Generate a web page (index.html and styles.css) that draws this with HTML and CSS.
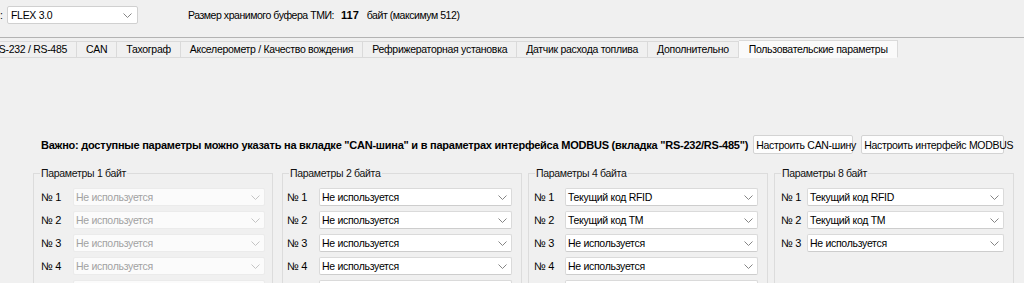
FILE: index.html
```html
<!DOCTYPE html>
<html lang="ru">
<head>
<meta charset="utf-8">
<title>Пользовательские параметры</title>
<link rel="stylesheet" href="styles.css">
</head>
<body>
<div class="top">
  <span class="cut">:</span>
  <div class="combo combo-top"><span>FLEX 3.0</span><svg class="chev" width="9" height="5" viewBox="0 0 9 5"><polyline points="0.5,0.5 4.5,4.5 8.5,0.5"/></svg></div>
  <div class="buf"><span>Размер хранимого буфера ТМИ:</span><b class="val">117</b><span>байт (максимум 512)</span></div>
</div>
<div class="rule"></div>
<div class="tabs">
  <div class="tab tab-first"><span>RS-232 / RS-485</span></div>
  <div class="tab">CAN</div>
  <div class="tab">Тахограф</div>
  <div class="tab">Акселерометр / Качество вождения</div>
  <div class="tab">Рефрижераторная установка</div>
  <div class="tab">Датчик расхода топлива</div>
  <div class="tab">Дополнительно</div>
  <div class="tab tab-active">Пользовательские параметры</div>
</div>
<div class="page">
  <div class="notice">
    <b class="notice-text">Важно: доступные параметры можно указать на вкладке "CAN-шина" и в параметрах интерфейса MODBUS (вкладка "RS-232/RS-485")</b>
    <button class="btn btn-can">Настроить CAN-шину</button>
    <button class="btn btn-modbus">Настроить интерфейс MODBUS</button>
  </div>
  <div class="groups">
    <fieldset class="group g1">
      <legend>Параметры 1 байт</legend>
      <div class="row"><span class="num">№ 1</span><div class="combo disabled"><span>Не используется</span><svg class="chev" width="9" height="5" viewBox="0 0 9 5"><polyline points="0.5,0.5 4.5,4.5 8.5,0.5"/></svg></div></div>
      <div class="row"><span class="num">№ 2</span><div class="combo disabled"><span>Не используется</span><svg class="chev" width="9" height="5" viewBox="0 0 9 5"><polyline points="0.5,0.5 4.5,4.5 8.5,0.5"/></svg></div></div>
      <div class="row"><span class="num">№ 3</span><div class="combo disabled"><span>Не используется</span><svg class="chev" width="9" height="5" viewBox="0 0 9 5"><polyline points="0.5,0.5 4.5,4.5 8.5,0.5"/></svg></div></div>
      <div class="row"><span class="num">№ 4</span><div class="combo disabled"><span>Не используется</span><svg class="chev" width="9" height="5" viewBox="0 0 9 5"><polyline points="0.5,0.5 4.5,4.5 8.5,0.5"/></svg></div></div>
      <div class="row"><span class="num">№ 5</span><div class="combo disabled"><span>Не используется</span><svg class="chev" width="9" height="5" viewBox="0 0 9 5"><polyline points="0.5,0.5 4.5,4.5 8.5,0.5"/></svg></div></div>
    </fieldset>
    <fieldset class="group g2">
      <legend>Параметры 2 байта</legend>
      <div class="row"><span class="num">№ 1</span><div class="combo"><span>Не используется</span><svg class="chev" width="9" height="5" viewBox="0 0 9 5"><polyline points="0.5,0.5 4.5,4.5 8.5,0.5"/></svg></div></div>
      <div class="row"><span class="num">№ 2</span><div class="combo"><span>Не используется</span><svg class="chev" width="9" height="5" viewBox="0 0 9 5"><polyline points="0.5,0.5 4.5,4.5 8.5,0.5"/></svg></div></div>
      <div class="row"><span class="num">№ 3</span><div class="combo"><span>Не используется</span><svg class="chev" width="9" height="5" viewBox="0 0 9 5"><polyline points="0.5,0.5 4.5,4.5 8.5,0.5"/></svg></div></div>
      <div class="row"><span class="num">№ 4</span><div class="combo"><span>Не используется</span><svg class="chev" width="9" height="5" viewBox="0 0 9 5"><polyline points="0.5,0.5 4.5,4.5 8.5,0.5"/></svg></div></div>
      <div class="row"><span class="num">№ 5</span><div class="combo"><span>Не используется</span><svg class="chev" width="9" height="5" viewBox="0 0 9 5"><polyline points="0.5,0.5 4.5,4.5 8.5,0.5"/></svg></div></div>
    </fieldset>
    <fieldset class="group g3">
      <legend>Параметры 4 байта</legend>
      <div class="row"><span class="num">№ 1</span><div class="combo"><span>Текущий код RFID</span><svg class="chev" width="9" height="5" viewBox="0 0 9 5"><polyline points="0.5,0.5 4.5,4.5 8.5,0.5"/></svg></div></div>
      <div class="row"><span class="num">№ 2</span><div class="combo"><span>Текущий код ТМ</span><svg class="chev" width="9" height="5" viewBox="0 0 9 5"><polyline points="0.5,0.5 4.5,4.5 8.5,0.5"/></svg></div></div>
      <div class="row"><span class="num">№ 3</span><div class="combo"><span>Не используется</span><svg class="chev" width="9" height="5" viewBox="0 0 9 5"><polyline points="0.5,0.5 4.5,4.5 8.5,0.5"/></svg></div></div>
      <div class="row"><span class="num">№ 4</span><div class="combo"><span>Не используется</span><svg class="chev" width="9" height="5" viewBox="0 0 9 5"><polyline points="0.5,0.5 4.5,4.5 8.5,0.5"/></svg></div></div>
      <div class="row"><span class="num">№ 5</span><div class="combo"><span>Не используется</span><svg class="chev" width="9" height="5" viewBox="0 0 9 5"><polyline points="0.5,0.5 4.5,4.5 8.5,0.5"/></svg></div></div>
    </fieldset>
    <fieldset class="group g4">
      <legend>Параметры 8 байт</legend>
      <div class="row"><span class="num">№ 1</span><div class="combo"><span>Текущий код RFID</span><svg class="chev" width="9" height="5" viewBox="0 0 9 5"><polyline points="0.5,0.5 4.5,4.5 8.5,0.5"/></svg></div></div>
      <div class="row"><span class="num">№ 2</span><div class="combo"><span>Текущий код ТМ</span><svg class="chev" width="9" height="5" viewBox="0 0 9 5"><polyline points="0.5,0.5 4.5,4.5 8.5,0.5"/></svg></div></div>
      <div class="row"><span class="num">№ 3</span><div class="combo"><span>Не используется</span><svg class="chev" width="9" height="5" viewBox="0 0 9 5"><polyline points="0.5,0.5 4.5,4.5 8.5,0.5"/></svg></div></div>
    </fieldset>
  </div>
</div>
</body>
</html>
```
FILE: styles.css
```css
html, body {
  margin: 0;
  padding: 0;
}
body {
  background: #f0f0f0;
  font-family: "Liberation Sans", Arial, sans-serif;
  font-size: 10.5px;
  letter-spacing: -0.3px;
  color: #000;
  width: 1024px;
  height: 283px;
  overflow: hidden;
}

/* top bar */
.top {
  height: 37px;
  box-sizing: border-box;
  padding-top: 6px;
  display: flex;
  align-items: flex-start;
}
.cut {
  width: 3px;
  line-height: 18px;
  overflow: hidden;
}
.combo {
  display: flex;
  align-items: center;
  justify-content: space-between;
  box-sizing: border-box;
  height: 18px;
  background: #fff;
  border: 1px solid #dadada;
  border-bottom-color: #cdcdcd;
  border-radius: 2px;
  padding: 0 4px 0 2px;
  white-space: nowrap;
  flex: 1;
}
.combo-top {
  flex: none;
  width: 131px;
  margin-left: 4px;
  border-color: #d0d0d0;
  padding: 0 5px 0 3px;
}
.chev {
  flex: none;
  display: block;
}
.chev polyline {
  fill: none;
  stroke: #858585;
  stroke-width: 1;
}
.buf {
  display: flex;
  align-items: center;
  height: 18px;
  margin-left: 50px;
  white-space: nowrap;
  letter-spacing: -0.45px;
}
.buf .val {
  margin: 0 8px 0 7px;
  letter-spacing: 0;
  font-size: 11px;
}

.rule {
  border-top: 1px solid #b3b3b3;
}

/* tabs */
.tabs {
  display: flex;
  margin-top: 3px;
  height: 17px;
  align-items: flex-end;
}
.tab {
  box-sizing: border-box;
  height: 17px;
  line-height: 15px;
  padding: 0 9px;
  border-top: 1px solid #dadada;
  border-bottom: 1px solid #dadada;
  border-right: 1px solid #dadada;
  white-space: nowrap;
  background: #f0f0f0;
}
.tab-first {
  width: 77px;
  display: flex;
  justify-content: flex-end;
  overflow: hidden;
  padding-right: 9px;
}
.tab-first span {
  flex: none;
}
.tab-active {
  height: 18px;
  line-height: 16px;
  background: #fafafa;
  border-bottom-color: #fafafa;
  padding: 0 9px 0 10px;
}

/* page */
.page {
  padding-top: 77px;
}
.notice {
  display: flex;
  align-items: center;
  margin-left: 41px;
  height: 19px;
}
.notice-text {
  white-space: nowrap;
  margin-right: 5px;
  font-size: 11px;
  letter-spacing: -0.24px;
}
.btn {
  font: inherit;
  letter-spacing: inherit;
  color: #000;
  height: 19px;
  box-sizing: border-box;
  background: #fdfdfd;
  border: 1px solid #d3d3d3;
  border-radius: 2px;
  padding: 0 2px;
  margin: 0;
  white-space: nowrap;
}
.btn-can {
  width: 100px;
  margin-right: 8px;
}
.btn-modbus {
  width: 143px;
}

.groups {
  display: flex;
  gap: 6px;
  padding-left: 33px;
  margin-top: 12px;
}
.group {
  width: 240px;
  box-sizing: border-box;
  height: 160px;
  margin: 0;
  padding: 8px 0 0 6px;
  border: 1px solid #dcdcdc;
  min-width: 0;
}
.group legend {
  padding: 0 1px;
  line-height: 14px;
  color: #111;
}
.g1 {
  margin-right: 3px;
}
.row {
  display: flex;
  align-items: center;
  height: 18px;
  margin: 0 9px 5px -6px;
}
.num {
  flex: none;
  white-space: nowrap;
  font-size: 11px;
}
.g1 .row { margin-right: 7px; }
.g1 .num { padding-left: 7px; width: 32px; }
.g2 .num { padding-left: 4px; width: 32px; }
.g3 .num { padding-left: 5px; width: 31px; }
.g4 .num { padding-left: 6px; width: 26px; }

.combo.disabled {
  background: #fbfbfb;
  border-color: #ebebeb;
  color: #a2a2a2;
}
.combo.disabled .chev polyline {
  stroke: #c4c4c4;
}
```
